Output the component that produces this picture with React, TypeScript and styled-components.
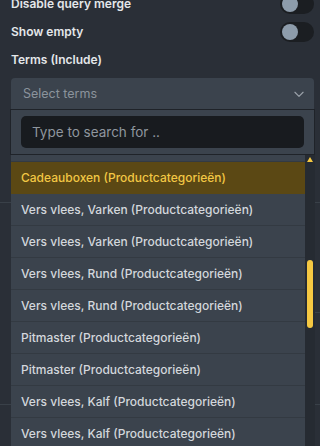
import styled, { createGlobalStyle } from "styled-components";

const GlobalStyle = createGlobalStyle`
  html, body {
    margin: 0;
    padding: 0;
    background: #2a2f37;
    overflow: hidden;
  }
  body {
    font-family: Inter, "Noto Sans", sans-serif;
    -webkit-font-smoothing: antialiased;
  }
`;

const Page = styled.div`
  position: relative;
  width: 320px;
  height: 446px;
  overflow: hidden;
  padding: 0 6px 0 11px;
  box-sizing: border-box;
`;

const Form = styled.div`
  display: flex;
  flex-direction: column;
  margin-top: -6px;
`;

const Row = styled.div`
  display: flex;
  align-items: center;
  justify-content: space-between;
  height: 20px;
  margin-bottom: 8px;
`;

const Label = styled.div`
  font-size: 12px;
  font-weight: 600;
  color: #e4e7ea;
  line-height: 20px;
`;

const Toggle = styled.div`
  width: 34px;
  height: 20px;
  border-radius: 10px;
  background: #1b1e22;
  display: flex;
  align-items: center;
  padding: 0 2px;
  box-sizing: border-box;
`;

const Knob = styled.div`
  width: 16px;
  height: 16px;
  border-radius: 50%;
  background: #8d9cab;
`;

const SelectWrap = styled.div`
  position: relative;
`;

const SelectField = styled.div`
  height: 31px;
  background: #3b434d;
  border-radius: 4px 4px 0 0;
  display: flex;
  align-items: center;
  justify-content: space-between;
  padding: 0 8px 0 12px;
  font-size: 12.5px;
  color: #8b939c;
`;

const Dropdown = styled.div`
  position: absolute;
  top: 31px;
  left: -1px;
  right: -1px;
  z-index: 2;
  display: flex;
  flex-direction: column;
`;

const SearchPanel = styled.div`
  background: #3b434d;
  border: 1px solid #1f2329;
  padding: 6px 10px 6px 10px;
`;

const SearchInput = styled.div`
  height: 32px;
  background: #181b1f;
  border-radius: 5px;
  display: flex;
  align-items: center;
  padding: 0 11px;
  font-size: 13.5px;
  color: #8f969e;
`;

const ListArea = styled.div`
  display: flex;
  height: 300px;
  padding-left: 1px;
`;

const List = styled.div`
  flex: 1;
  overflow: hidden;
  background: #3b434d;
`;

const Items = styled.div`
  margin-top: -25px;
`;

const Item = styled.div<{ $active?: boolean }>`
  height: 32px;
  box-sizing: border-box;
  display: flex;
  align-items: center;
  padding-left: 10px;
  font-size: 12px;
  font-weight: 500;
  color: ${(p) => (p.$active ? "#f2c744" : "#d3d7dc")};
  background: ${(p) => (p.$active ? "#5b4814" : "#3b434d")};
  border-bottom: 1px solid ${(p) => (p.$active ? "#5b4814" : "#333a42")};
`;

const ScrollTrack = styled.div`
  position: relative;
  width: 10px;
  background: #262b32;
`;

const ScrollArrow = styled.div`
  position: absolute;
  top: 2px;
  left: 2px;
  width: 0;
  height: 0;
  border-left: 3px solid transparent;
  border-right: 3px solid transparent;
  border-bottom: 5px solid #f5c842;
`;

const ScrollThumb = styled.div`
  position: absolute;
  left: 2px;
  width: 6px;
  height: 68px;
  border-radius: 3px;
  background: #f5c842;
`;

const Backdrop = styled.div`
  display: flex;
  flex-direction: column;
  margin: 0 -6px 0 -11px;
`;

const Section = styled.div<{ $h: number }>`
  height: ${(p) => p.$h}px;
  border-bottom: 1px solid #394048;
  display: flex;
  justify-content: flex-end;
  align-items: flex-end;
`;

const SubLine = styled.div`
  width: 120px;
  border-bottom: 1px solid #394048;
  margin-bottom: 91px;
`;

const items = [
  "Cadeauboxen (Productcategorieën)",
  "Cadeauboxen (Productcategorieën)",
  "Vers vlees, Varken (Productcategorieën)",
  "Vers vlees, Varken (Productcategorieën)",
  "Vers vlees, Rund (Productcategorieën)",
  "Vers vlees, Rund (Productcategorieën)",
  "Pitmaster (Productcategorieën)",
  "Pitmaster (Productcategorieën)",
  "Vers vlees, Kalf (Productcategorieën)",
  "Vers vlees, Kalf (Productcategorieën)",
];

const Chevron = () => (
  <svg width="14" height="14" viewBox="0 0 24 24" fill="none" stroke="#9aa1a9" strokeWidth="2" strokeLinecap="round" strokeLinejoin="round">
    <path d="M5 9l7 7 7-7" />
  </svg>
);

export default function App() {
  const thumbTop = 105;
  return (
    <Page>
      <GlobalStyle />
      <Form>
        <Row>
          <Label>Disable query merge</Label>
          <Toggle>
            <Knob />
          </Toggle>
        </Row>
        <Row>
          <Label>Show empty</Label>
          <Toggle>
            <Knob />
          </Toggle>
        </Row>
        <Row>
          <Label>Terms (Include)</Label>
        </Row>
        <SelectWrap>
          <SelectField>
            <span>Select terms</span>
            <Chevron />
          </SelectField>
          <Dropdown>
            <SearchPanel>
              <SearchInput>Type to search for ..</SearchInput>
            </SearchPanel>
            <ListArea>
              <List>
                <Items>
                  {items.map((t, i) => (
                    <Item key={i} $active={i === 1}>
                      {t}
                    </Item>
                  ))}
                </Items>
              </List>
              <ScrollTrack>
                <ScrollArrow />
                <ScrollThumb style={{ top: thumbTop }} />
              </ScrollTrack>
            </ListArea>
          </Dropdown>
        </SelectWrap>
        <Backdrop>
          <Section $h={93} />
          <Section $h={201}>
            <SubLine />
          </Section>
        </Backdrop>
      </Form>
    </Page>
  );
}
